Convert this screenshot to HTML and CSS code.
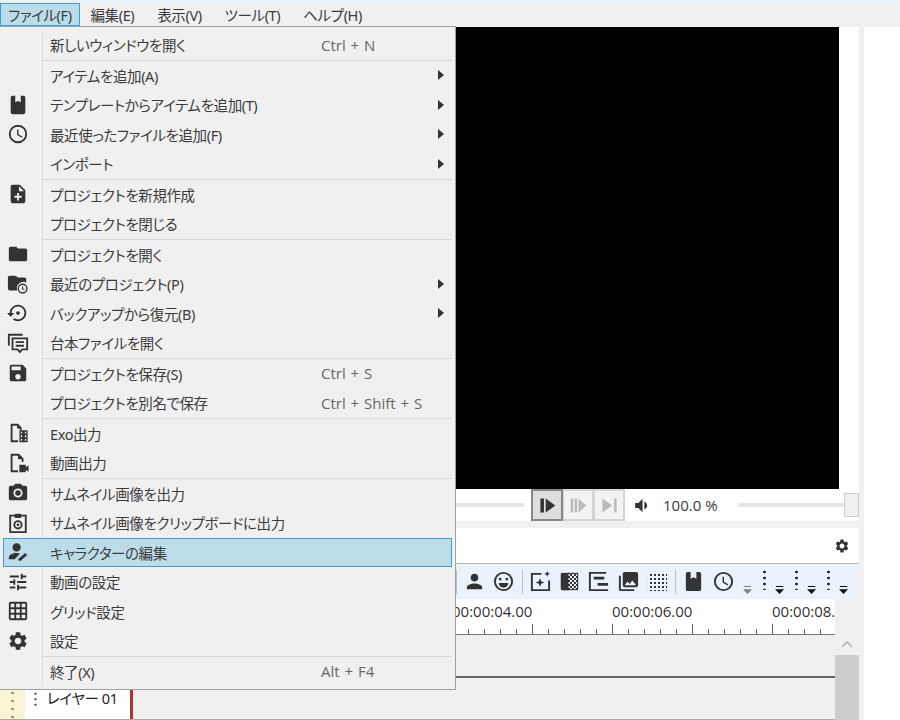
FILE: index.html
```html
<!DOCTYPE html>
<html lang="ja">
<head>
    <meta charset="UTF-8">
    <meta name="viewport" content="width=device-width, initial-scale=1.0">
    <title>ファイルメニュー</title>
    <link rel="stylesheet" href="styles.css">
</head>
<body>
    <svg class="defs" width="0" height="0" aria-hidden="true">
        <defs>
            <pattern id="dither" width="4.170" height="4.170" patternUnits="userSpaceOnUse">
                <rect width="2.085" height="2.085"/>
                <rect x="2.085" y="2.085" width="2.085" height="2.085"/>
            </pattern>
            <pattern id="dots" width="4.170" height="4.170" patternUnits="userSpaceOnUse">
                <rect width="2.085" height="2.085"/>
            </pattern>
        </defs>
        <symbol id="i-book" viewBox="0 0 24 24"><path d="M6 2h3v7l3-1.500 3 1.500V2h3a2 2 0 0 1 2 2v16a2 2 0 0 1-2 2H6a2 2 0 0 1-2-2V4a2 2 0 0 1 2-2z"/></symbol>
        <symbol id="i-clock" viewBox="0 0 24 24"><path d="M12 2a10 10 0 1 0 0 20 10 10 0 0 0 0-20zm0 18a8 8 0 1 1 0-16 8 8 0 0 1 0 16zm.5-13H11v6l5.25 3.15.75-1.23-4.5-2.67z"/></symbol>
        <symbol id="i-note-add" viewBox="0 0 24 24"><path d="M14 2H6c-1.1 0-1.99.9-1.99 2L4 20c0 1.1.89 2 1.99 2H18c1.1 0 2-.9 2-2V8l-6-6zm2 14h-3v3h-2v-3H8v-2h3v-3h2v3h3v2zm-3-7V3.5L18.5 9H13z"/></symbol>
        <symbol id="i-folder" viewBox="0 0 24 24"><path d="M10 4H4c-1.1 0-1.99.9-1.99 2L2 18c0 1.1.9 2 2 2h16c1.1 0 2-.9 2-2V8c0-1.1-.9-2-2-2h-8l-2-2z"/></symbol>
        <symbol id="i-folder-clock" viewBox="0 0 24 24"><path d="M9 3H3c-1.1 0-2 .9-2 2v12c0 1.1.9 2 2 2h8.2a7 7 0 0 1 9.8-8.6V7c0-1.1-.9-2-2-2h-7L9 3z"/><path d="M17 11.500a5.500 5.500 0 1 0 0 11 5.500 5.500 0 0 0 0-11zm0 9.500a4 4 0 1 1 0-8 4 4 0 0 1 0 8zm.5-6.500h-1.200v3l2.400 1.400.6-1-1.800-1z"/></symbol>
        <symbol id="i-restore" viewBox="0 0 24 24"><path d="M14 12c0-1.100-.9-2-2-2s-2 .9-2 2 .9 2 2 2 2-.9 2-2zm-2-9c-4.970 0-9 4.030-9 9H0l4 4 4-4H5c0-3.870 3.130-7 7-7s7 3.130 7 7-3.130 7-7 7c-1.510 0-2.910-.49-4.060-1.300l-1.420 1.440C8.040 20.300 9.940 21 12 21c4.970 0 9-4.030 9-9s-4.030-9-9-9z"/></symbol>
        <symbol id="i-script" viewBox="0 0 24 24"><path class="line" d="M2 15V3h15M6 7h16v12h-5.500L14 22l-2.500-3H6zM9.500 11h9M9.500 15h9"/></symbol>
        <symbol id="i-save" viewBox="0 0 24 24"><path d="M17 3H5c-1.110 0-2 .9-2 2v14c0 1.100.89 2 2 2h14c1.100 0 2-.9 2-2V7l-4-4zm-5 16c-1.660 0-3-1.340-3-3s1.340-3 3-3 3 1.340 3 3-1.340 3-3 3zm3-10H5V5h10v4z"/></symbol>
        <symbol id="i-exo" viewBox="0 0 24 24"><path d="M4 2h8l4 4v3h-2V7h-3V4H6v16h6v2H4z"/><path fill-rule="evenodd" d="M13.500 9h9v13h-9zM15 10.500v2h1.500v-2zm4.500 0v2H21v-2zM15 14.500v2h1.500v-2zm4.500 0v2H21v-2zM15 18.500v2h1.500v-2zm4.500 0v2H21v-2z"/></symbol>
        <symbol id="i-movie" viewBox="0 0 24 24"><path d="M4 2h9l5 5v4h-2V8h-4V4H6v16h6v2H4z"/><path d="M13.500 14h7v2.500l3-2v7l-3-2V22h-7z"/></symbol>
        <symbol id="i-camera" viewBox="0 0 24 24"><path d="M9 2 7.170 4H4c-1.100 0-2 .9-2 2v12c0 1.100.9 2 2 2h16c1.100 0 2-.9 2-2V6c0-1.100-.9-2-2-2h-3.170L15 2H9zm3 15a5 5 0 1 1 0-10 5 5 0 0 1 0 10z"/><circle cx="12" cy="12" r="3"/></symbol>
        <symbol id="i-clip-camera" viewBox="0 0 24 24"><path class="line" d="M9 4H3.500v18h17V4H15"/><path d="M8.500 2h7v4.500h-7z"/><circle class="line" cx="12" cy="14" r="4"/><circle cx="12" cy="14" r="1.500"/></symbol>
        <symbol id="i-person-edit" viewBox="0 0 24 24"><circle cx="10.500" cy="7" r="4.500"/><path d="M2 20v-2c0-3.200 4.500-5 8.500-5 1.300 0 2.500.2 3.700.5L8.500 20z"/><path d="M12.500 21.500v-2.200l7.500-6.300 2 2.300-7 6.200z"/></symbol>
        <symbol id="i-tune" viewBox="0 0 24 24"><path d="M3 17v2h6v-2H3zM3 5v2h10V5H3zm10 16v-2h8v-2h-8v-2h-2v6h2zM7 9v2H3v2h4v2h2V9H7zm14 4v-2H11v2h10zm-6-4h2V7h4V5h-4V3h-2v6z"/></symbol>
        <symbol id="i-grid" viewBox="0 0 24 24"><path d="M20 2H4c-1.100 0-2 .9-2 2v16c0 1.100.9 2 2 2h16c1.100 0 2-.9 2-2V4c0-1.100-.9-2-2-2zM8 20H4v-4h4v4zm0-6H4v-4h4v4zm0-6H4V4h4v4zm6 12h-4v-4h4v4zm0-6h-4v-4h4v4zm0-6h-4V4h4v4zm6 12h-4v-4h4v4zm0-6h-4v-4h4v4zm0-6h-4V4h4v4z"/></symbol>
        <symbol id="i-gear" viewBox="0 0 24 24"><path d="M19.140 12.940c.04-.3.06-.61.06-.94 0-.32-.02-.64-.07-.94l2.030-1.580a.49.49 0 0 0 .12-.61l-1.920-3.320a.488.488 0 0 0-.59-.22l-2.390.96c-.5-.38-1.030-.7-1.620-.94l-.36-2.540a.484.484 0 0 0-.48-.41h-3.840c-.24 0-.43.17-.47.41l-.36 2.540c-.59.24-1.130.57-1.620.94l-2.390-.96c-.22-.08-.47 0-.59.22L2.740 8.870c-.12.21-.08.47.12.61l2.030 1.580c-.05.3-.09.63-.09.94s.02.64.07.94l-2.030 1.580a.49.49 0 0 0-.12.61l1.920 3.320c.12.22.37.29.59.22l2.390-.96c.5.38 1.030.7 1.620.94l.36 2.540c.05.24.24.41.48.41h3.840c.24 0 .44-.17.47-.41l.36-2.540c.59-.24 1.130-.56 1.620-.94l2.390.96c.22.08.47 0 .59-.22l1.920-3.320c.12-.22.07-.47-.12-.61l-2.010-1.580zM12 15.600c-1.980 0-3.600-1.620-3.600-3.600s1.620-3.600 3.600-3.600 3.600 1.620 3.600 3.600-1.620 3.600-3.600 3.600z"/></symbol>
        <symbol id="i-play" viewBox="0 0 24 24"><path d="M2 2h5v20H2zM9.500 2L23 12 9.500 22z"/></symbol>
        <symbol id="i-frame" viewBox="0 0 24 24"><path d="M1 2h3.500v20H1zM6.500 2H10v20H6.500zM12 2l11 10-11 10z"/></symbol>
        <symbol id="i-end" viewBox="0 0 24 24"><path d="M2 2l14 10-14 10zM18.500 2H22v20h-3.500z"/></symbol>
        <symbol id="i-volume" viewBox="0 0 24 24"><path d="M3 8.500v7h4.500l6 6v-19l-6 6zM16 6.500v11c2.500-1 4-3.300 4-5.500s-1.500-4.500-4-5.500z"/></symbol>
        <symbol id="i-person" viewBox="0 0 24 24"><path d="M12 12c2.210 0 4-1.790 4-4s-1.790-4-4-4-4 1.790-4 4 1.790 4 4 4zm0 2c-2.670 0-8 1.340-8 4v2h16v-2c0-2.660-5.330-4-8-4z"/></symbol>
        <symbol id="i-smile" viewBox="0 0 24 24"><path d="M12 2a10 10 0 1 0 0 20 10 10 0 0 0 0-20zm0 18a8 8 0 1 1 0-16 8 8 0 0 1 0 16z"/><circle cx="8.500" cy="9.500" r="1.500"/><circle cx="15.500" cy="9.500" r="1.500"/><path d="M7 13.500h10a5 5 0 0 1-10 0z"/></symbol>
        <symbol id="i-sparkle" viewBox="0 0 24 24"><path class="line" d="M13 4H3v17h18V11"/><path d="M11.500 8.500l1.300 3.200 3.200 1.300-3.200 1.300-1.300 3.200-1.300-3.200L7 13l3.200-1.300zM19 1l.9 2.100L22 4l-2.100.9L19 7l-.9-2.100L16 4l2.100-.9z"/></symbol>
        <symbol id="i-dither" viewBox="0 0 24 24"><path d="M5 3h6v18H5a2 2 0 0 1-2-2V5a2 2 0 0 1 2-2z"/><rect x="10" y="3" width="11" height="18" fill="url(#dither)"/><path class="thin" d="M3.500 3.500h17v17h-17z"/></symbol>
        <symbol id="i-align" viewBox="0 0 24 24"><path d="M2 2h2v20H2zM4 2h16v2H4zM4 20h18v2H4zM7 7h11v3H7zM11 13.500h11v3H11z"/></symbol>
        <symbol id="i-library" viewBox="0 0 24 24"><path d="M22 16V4c0-1.100-.9-2-2-2H8c-1.100 0-2 .9-2 2v12c0 1.100.9 2 2 2h12c1.100 0 2-.9 2-2zm-11-4 2.030 2.710L16 11l4 5H8l3-4zM2 6v14c0 1.100.9 2 2 2h14v-2H4V6H2z"/></symbol>
        <symbol id="i-dots" viewBox="0 0 24 24"><rect x="2" y="2" width="20" height="20" fill="url(#dots)"/></symbol>
        <symbol id="i-drop" viewBox="0 0 10 10"><path d="M1 0h8v1.200H1zM0 3.500h10L5 9z"/></symbol>
    </svg>

    <div class="app">
        <nav class="menubar">
            <span class="menubar-item active">ファイル(F)</span>
            <span class="menubar-item">編集(E)</span>
            <span class="menubar-item">表示(V)</span>
            <span class="menubar-item">ツール(T)</span>
            <span class="menubar-item">ヘルプ(H)</span>
        </nav>

        <div class="workspace">
            <main class="main">
                <div class="preview"><div class="video"></div></div>

                <div class="transport">
                    <div class="seek"></div>
                    <div class="buttons">
                        <button class="tbtn pressed"><svg class="ic-tbtn"><use href="#i-play"/></svg></button>
                        <button class="tbtn off"><svg class="ic-tbtn"><use href="#i-frame"/></svg></button>
                        <button class="tbtn off"><svg class="ic-tbtn"><use href="#i-end"/></svg></button>
                    </div>
                    <svg class="ic-volume"><use href="#i-volume"/></svg>
                    <span class="volume-value">100.0 %</span>
                    <div class="volume">
                        <div class="volume-track"></div>
                        <div class="volume-thumb"></div>
                    </div>
                </div>

                <div class="tabrow">
                    <svg class="ic-small"><use href="#i-gear"/></svg>
                </div>

                <div class="toolbar">
                    <i class="tool-sep"></i>
                    <span class="tool"><svg><use href="#i-person"/></svg></span>
                    <span class="tool"><svg><use href="#i-smile"/></svg></span>
                    <i class="tool-sep"></i>
                    <span class="tool"><svg><use href="#i-sparkle"/></svg></span>
                    <span class="tool"><svg><use href="#i-dither"/></svg></span>
                    <span class="tool"><svg><use href="#i-align"/></svg></span>
                    <span class="tool"><svg><use href="#i-library"/></svg></span>
                    <span class="tool"><svg><use href="#i-dots"/></svg></span>
                    <i class="tool-sep"></i>
                    <span class="tool"><svg><use href="#i-book"/></svg></span>
                    <span class="tool"><svg><use href="#i-clock"/></svg></span>
                    <span class="tool-drop dim"><svg><use href="#i-drop"/></svg></span>
                    <span class="tool-more"><b class="vdots"></b><span class="tool-drop"><svg><use href="#i-drop"/></svg></span></span>
                    <span class="tool-more"><b class="vdots"></b><span class="tool-drop"><svg><use href="#i-drop"/></svg></span></span>
                    <span class="tool-more"><b class="vdots"></b><span class="tool-drop"><svg><use href="#i-drop"/></svg></span></span>
                </div>

                <div class="timeline">
                    <div class="tracks">
                        <div class="ruler">
                            <span class="ruler-label">00:00:04.00</span>
                            <span class="ruler-label">00:00:06.00</span>
                            <span class="ruler-label">00:00:08.00</span>
                        </div>
                        <div class="track-empty"></div>
                        <div class="track">
                            <div class="layer-grip"></div>
                            <div class="layer-head">
                                <b class="layer-dots"></b>
                                <span class="layer-name">レイヤー 01</span>
                            </div>
                        </div>
                    </div>
                    <div class="vscroll">
                        <svg class="chevron" viewBox="0 0 12 8"><path d="M1 7l5-5 5 5"/></svg>
                        <div class="vscroll-thumb"></div>
                    </div>
                </div>
            </main>
            <div class="gutter"></div>
            <aside class="side"></aside>
        </div>

        <div class="menu">
            <div class="item"><span class="ico"></span><span class="label">新しいウィンドウを開く</span><span class="keys">Ctrl + N</span></div>
            <div class="sep"></div>
            <div class="item"><span class="ico"></span><span class="label">アイテムを追加(A)</span><i class="arrow"></i></div>
            <div class="item"><span class="ico"><svg><use href="#i-book"/></svg></span><span class="label">テンプレートからアイテムを追加(T)</span><i class="arrow"></i></div>
            <div class="item"><span class="ico"><svg><use href="#i-clock"/></svg></span><span class="label">最近使ったファイルを追加(F)</span><i class="arrow"></i></div>
            <div class="item"><span class="ico"></span><span class="label">インポート</span><i class="arrow"></i></div>
            <div class="sep"></div>
            <div class="item"><span class="ico"><svg><use href="#i-note-add"/></svg></span><span class="label">プロジェクトを新規作成</span></div>
            <div class="item"><span class="ico"></span><span class="label">プロジェクトを閉じる</span></div>
            <div class="sep"></div>
            <div class="item"><span class="ico"><svg><use href="#i-folder"/></svg></span><span class="label">プロジェクトを開く</span></div>
            <div class="item"><span class="ico"><svg><use href="#i-folder-clock"/></svg></span><span class="label">最近のプロジェクト(P)</span><i class="arrow"></i></div>
            <div class="item"><span class="ico"><svg><use href="#i-restore"/></svg></span><span class="label">バックアップから復元(B)</span><i class="arrow"></i></div>
            <div class="item"><span class="ico"><svg><use href="#i-script"/></svg></span><span class="label">台本ファイルを開く</span></div>
            <div class="sep"></div>
            <div class="item"><span class="ico"><svg><use href="#i-save"/></svg></span><span class="label">プロジェクトを保存(S)</span><span class="keys">Ctrl + S</span></div>
            <div class="item"><span class="ico"></span><span class="label">プロジェクトを別名で保存</span><span class="keys">Ctrl + Shift + S</span></div>
            <div class="sep"></div>
            <div class="item"><span class="ico"><svg><use href="#i-exo"/></svg></span><span class="label">Exo出力</span></div>
            <div class="item"><span class="ico"><svg><use href="#i-movie"/></svg></span><span class="label">動画出力</span></div>
            <div class="sep"></div>
            <div class="item"><span class="ico"><svg><use href="#i-camera"/></svg></span><span class="label">サムネイル画像を出力</span></div>
            <div class="item"><span class="ico"><svg><use href="#i-clip-camera"/></svg></span><span class="label">サムネイル画像をクリップボードに出力</span></div>
            <div class="item selected"><span class="ico"><svg><use href="#i-person-edit"/></svg></span><span class="label">キャラクターの編集</span></div>
            <div class="item"><span class="ico"><svg><use href="#i-tune"/></svg></span><span class="label">動画の設定</span></div>
            <div class="item"><span class="ico"><svg><use href="#i-grid"/></svg></span><span class="label">グリッド設定</span></div>
            <div class="item"><span class="ico"><svg><use href="#i-gear"/></svg></span><span class="label">設定</span></div>
            <div class="sep"></div>
            <div class="item"><span class="ico"></span><span class="label">終了(X)</span><span class="keys">Alt + F4</span></div>
        </div>
    </div>
</body>
</html>
```

FILE: styles.css
```css
* {
    box-sizing: border-box;
}

html, body {
    margin: 0;
    height: 100%;
    overflow: hidden;
}

body {
    font-family: "Noto Sans", "Noto Sans CJK JP", sans-serif;
    font-size: 14.5px;
    letter-spacing: -0.4px;
    font-feature-settings: "palt";
    color: #3c3c3c;
    background-color: #f0f0f0;
}

svg {
    fill: #333;
}

.defs {
    position: absolute;
}

.line {
    fill: none;
    stroke: #333;
    stroke-width: 2;
}

.thin {
    fill: none;
    stroke: #333;
    stroke-width: 1;
}

.app {
    position: relative;
    display: flex;
    flex-direction: column;
    width: 900px;
    height: 720px;
    overflow: hidden;
}

/* menu bar */
.menubar {
    display: flex;
    flex: none;
    height: 27px;
    padding-top: 3px;
    background: linear-gradient(#e9f3fb, #f0f0f0 5px);
}

.menubar-item {
    display: flex;
    align-items: center;
    height: 23px;
    padding: 0 10.5px;
    border: 1px solid transparent;
    white-space: nowrap;
}

.menubar-item.active {
    width: 80px;
    margin-right: -1px;
    padding: 0 7px;
    background-color: #bcdcea;
    border-color: #3f9fd2;
}

/* main window */
.workspace {
    display: flex;
    flex: 1;
    min-height: 0;
}

.main {
    display: flex;
    flex-direction: column;
    width: 859px;
    flex: none;
}

.gutter {
    width: 5px;
    flex: none;
}

.side {
    flex: 1;
    background-color: white;
}

.preview {
    flex: none;
    height: 462px;
    padding: 0 20px 0 455px;
    background-color: white;
}

.video {
    height: 100%;
    background-color: black;
}

.transport {
    display: flex;
    align-items: center;
    flex: none;
    height: 32px;
    padding-left: 455px;
    background-color: white;
    margin-bottom: 7px;
}

.seek {
    width: 69px;
    height: 4px;
    margin-right: 7px;
    background-color: #e6e6e6;
}

.buttons {
    display: flex;
    height: 32px;
}

.tbtn {
    display: flex;
    align-items: center;
    justify-content: center;
    width: 32px;
    height: 32px;
    margin-right: -1px;
    padding: 0;
    background-color: #f3f3f3;
    border: 2px solid #d4d4d4;
}

.tbtn.pressed {
    background-color: #dedede;
    border-color: #888;
    position: relative;
}

.ic-tbtn {
    width: 17px;
    height: 17px;
}

.tbtn.off .ic-tbtn {
    fill: #bbb;
}

.ic-volume {
    width: 17px;
    height: 17px;
    margin-left: 9px;
}

.volume-value {
    width: 75px;
    margin-left: 13px;
    font-family: "Open Sans", sans-serif;
    font-size: 15px;
    letter-spacing: 0;
}

.volume {
    display: flex;
    align-items: center;
    flex: 1;
}

.volume-track {
    flex: 1;
    height: 4px;
    background-color: #e6e6e6;
}

.volume-thumb {
    width: 15px;
    height: 24px;
    background-color: #f0f0f0;
    border: 1px solid #ccc;
}

.tabrow {
    display: flex;
    align-items: center;
    justify-content: flex-end;
    flex: none;
    height: 36px;
    padding-right: 9px;
    background-color: white;
    border-bottom: 1px solid #b9b9b9;
}

.ic-small {
    width: 16px;
    height: 16px;
}

/* toolbar */
.toolbar {
    display: flex;
    align-items: center;
    flex: none;
    height: 35px;
    padding-left: 456px;
    background-color: #eaf3fc;
}

.tool-sep {
    width: 1px;
    height: 24px;
    margin: 0 3px;
    background-color: #bdbdbd;
}

.toolbar .tool-sep:first-child {
    margin-left: 0;
}

.tool {
    display: flex;
    align-items: center;
    justify-content: center;
    width: 29.3px;
    height: 24px;
}

.tool svg {
    width: 23px;
    height: 23px;
}

.tool-drop {
    display: flex;
    align-items: flex-end;
    justify-content: center;
    width: 14px;
    height: 26px;
}

.tool-drop svg {
    width: 9px;
    height: 9px;
    fill: #111;
}

.tool-drop.dim {
    width: 19px;
}

.tool-drop.dim svg {
    fill: #808080;
}

.tool-more {
    display: flex;
    width: 32px;
    height: 26px;
}

.vdots {
    width: 16px;
    height: 21px;
    background: radial-gradient(circle, #333 1.3px, transparent 1.6px) center top / 3px 6px repeat-y;
}

/* timeline */
.timeline {
    display: flex;
    flex: 1;
    min-height: 0;
}

.tracks {
    display: flex;
    flex-direction: column;
    flex: 1;
    min-width: 0;
    overflow: hidden;
}

.ruler {
    display: flex;
    flex: none;
    height: 36px;
    padding-left: 452px;
    background-color: white;
    border-bottom: 1px solid #777;
    background-image:
        linear-gradient(to right, #666 1px, transparent 1px),
        linear-gradient(to right, #666 1px, transparent 1px);
    background-size: 80px 10px, 16px 5px;
    background-position: 52px bottom, 4px bottom;
    background-repeat: repeat-x;
}

.ruler-label {
    flex: none;
    width: 160px;
    padding-top: 2px;
    font-family: "Open Sans", sans-serif;
    font-size: 15px;
    letter-spacing: 0;
    color: #333;
}

.track-empty {
    flex: none;
    height: 43px;
    border-bottom: 2px solid #666;
}

.track {
    display: flex;
    flex: 1;
    border-bottom: 1px solid #aaa;
}

.layer-grip {
    width: 25px;
    background:
        radial-gradient(circle, #777 1px, transparent 1.3px) 0 3px / 25px 8px repeat-y,
        #fcf3d2;
}

.layer-head {
    display: flex;
    width: 108px;
    padding-top: 11px;
    background-color: white;
    border-right: 3px solid #ad3232;
}

.layer-dots {
    width: 3px;
    height: 15px;
    margin: 2px 9px 0 9px;
    background: radial-gradient(circle, #555 1px, transparent 1.3px) center top / 3px 5.5px repeat-y;
}

.layer-name {
    color: #222;
    line-height: 18px;
    margin-left: 1px;
}

.vscroll {
    flex: none;
    width: 24px;
    padding-top: 41px;
}

.chevron {
    display: block;
    width: 12px;
    height: 8px;
    margin: 0 auto 7px;
    fill: none;
    stroke: #b5b5b5;
    stroke-width: 1.6;
}

.vscroll-thumb {
    height: 70px;
    background-color: #cdcdcd;
}

/* file menu, open over the window */
.menu {
    position: absolute;
    top: 26px;
    left: 0;
    width: 456px;
    height: 664px;
    padding-top: 3px;
    background: linear-gradient(#dcdcdc, #dcdcdc) 42px 6px / 1px 652px no-repeat #f0f0f0;
    border: 1px solid #a0a0a0;
    border-left: none;
}

.item {
    display: flex;
    align-items: center;
    height: 29.5px;
    margin: 0 3px;
    border: 1px solid transparent;
}

.item.selected {
    background-color: #bcdcea;
    border-color: #3f9fd2;
}

.ico {
    display: flex;
    align-items: center;
    justify-content: center;
    flex: none;
    width: 28px;
    height: 24px;
}

.ico svg {
    width: 22px;
    height: 22px;
}

.label {
    flex: none;
    width: 271px;
    margin-left: 18px;
    white-space: nowrap;
}

.keys {
    font-family: "Open Sans", sans-serif;
    font-size: 15px;
    letter-spacing: 0;
    color: #666;
    white-space: pre;
    word-spacing: 1px;
}

.arrow {
    width: 0;
    height: 0;
    margin-left: auto;
    margin-right: 7px;
    border-top: 5px solid transparent;
    border-bottom: 5px solid transparent;
    border-left: 6px solid #333;
}

.sep {
    height: 1px;
    margin: 0 3px 0 42px;
    background-color: #d6d6d6;
}
```
